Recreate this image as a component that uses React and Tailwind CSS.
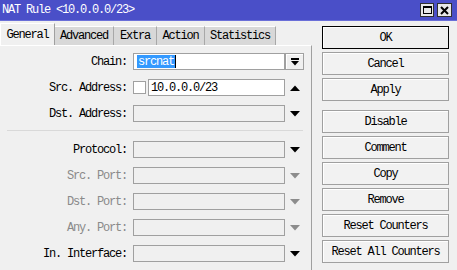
import React from "react";

function Down({ gray }) {
  return (
    <svg width="10" height="6" viewBox="0 0 10 6">
      <polygon points="0,0 10,0 5,5.5" fill={gray ? "#8c8c8c" : "#000"} />
    </svg>
  );
}

function Up() {
  return (
    <svg width="10" height="6" viewBox="0 0 10 6">
      <polygon points="0,6 10,6 5,0.5" fill="#000" />
    </svg>
  );
}

function Row({ label, gray, children, arrow }) {
  return (
    <div className="flex items-center h-[17px]">
      <div className={gray ? "w-[127px] text-right text-[#8a8a8a] whitespace-pre" : "w-[127px] text-right text-black whitespace-pre"}>
        {label}
      </div>
      <div className="ml-[6px] w-[152px] h-[17px] flex">{children}</div>
      <div className="w-[19px] h-[17px] flex items-center justify-center">{arrow}</div>
    </div>
  );
}

function EmptyBox() {
  return <div className="w-full h-full border border-[#a0a0a0] bg-[#f0f0f0]" />;
}

function Btn({ children, def }) {
  return (
    <div
      className={
        def
          ? "h-[23px] w-[127px] flex items-center justify-center border border-black bg-[#f0f0f0] shadow-[inset_1px_1px_0_#ffffff]"
          : "h-[23px] w-[127px] flex items-center justify-center border border-[#a0a0a0] bg-[#f2f2f2] shadow-[inset_1px_1px_0_#ffffff]"
      }
    >
      {children}
    </div>
  );
}

export default function App() {
  return (
    <div className="w-[457px] h-[270px] overflow-hidden bg-[#f0f0f0] font-[family-name:'Liberation_Mono',monospace] text-[12px] tracking-[-1.2px] text-black leading-none">
      {/* title bar */}
      <div className="h-[21px] bg-[#4a4fc8] flex items-center justify-between pl-[2px] pr-[5px] border-b border-[#6a6fd8]">
        <span className="text-white whitespace-pre">NAT Rule &lt;10.0.0.0/23&gt;</span>
        <div className="flex gap-[3px]">
          <div className="w-[14px] h-[14px] bg-[#e8e8e8] border border-[#303030] flex items-center justify-center">
            <div className="w-[9px] h-[8px] border border-black border-t-2" />
          </div>
          <div className="w-[15px] h-[14px] bg-[#e8e8e8] border border-[#303030] flex items-center justify-center">
            <svg width="9" height="9" viewBox="0 0 9 9">
              <path d="M1 1 L8 8 M8 1 L1 8" stroke="#000" strokeWidth="2" />
            </svg>
          </div>
        </div>
      </div>

      <div className="flex">
        {/* left side */}
        <div className="w-[312px] flex flex-col">
          {/* tabs */}
          <div className="flex items-end h-[24px] pt-[2px]">
            <div className="h-[22px] w-[55px] bg-[#f0f0f0] border-t border-l border-white border-r border-r-[#a0a0a0] flex items-center justify-center relative z-10">
              General
            </div>
            <div className="h-[19px] w-[59px] bg-[#d8d8d8] border-t border-white border-r border-r-[#a8a8a8] flex items-center justify-center">
              Advanced
            </div>
            <div className="h-[19px] w-[43px] bg-[#d8d8d8] border-t border-white border-r border-r-[#a8a8a8] flex items-center justify-center">
              Extra
            </div>
            <div className="h-[19px] w-[48px] bg-[#d8d8d8] border-t border-white border-r border-r-[#a8a8a8] flex items-center justify-center">
              Action
            </div>
            <div className="h-[19px] w-[71px] bg-[#d8d8d8] border-t border-white border-r border-r-[#a8a8a8] flex items-center justify-center">
              Statistics
            </div>
          </div>
          {/* panel */}
          <div className="h-[225px] border-t border-white border-r border-r-[#a0a0a0] pt-[7px] flex flex-col">
            <div className="flex flex-col gap-[9px]">
              <Row
                label="Chain:"
                arrow={
                  <div className="w-[19px] h-[17px] border border-[#a0a0a0] bg-[#f0f0f0] shadow-[inset_1px_1px_0_#ffffff] flex flex-col items-center justify-center gap-[1px]">
                    <div className="w-[8px] h-[2px] bg-black" />
                    <svg width="8" height="5" viewBox="0 0 8 5">
                      <polygon points="0,0 8,0 4,4.5" fill="#000" />
                    </svg>
                  </div>
                }
              >
                <div className="w-full h-full border border-[#a0a0a0] bg-white flex items-center pl-[3px]">
                  <span className="bg-[#3399ff] text-white h-[13px] flex items-center px-[1px]">srcnat</span>
                  <span className="w-[1px] h-[13px] bg-black" />
                </div>
              </Row>
              <Row label="Src. Address:" arrow={<Up />}>
                <div className="flex items-center w-full h-full">
                  <div className="w-[13px] h-[13px] border border-[#a0a0a0] bg-white" />
                  <div className="ml-[2px] flex-1 h-[17px] border border-[#a0a0a0] bg-white flex items-center pl-[2px]">
                    10.0.0.0/23
                  </div>
                </div>
              </Row>
              <Row label="Dst. Address:" arrow={<Down />}>
                <EmptyBox />
              </Row>
            </div>
            <div className="ml-[7px] mr-[8px] mt-[8px] mb-[10px] h-[1px] bg-[#d9d9d9]" />
            <div className="flex flex-col gap-[9px]">
              <Row label="Protocol:" arrow={<Down />}>
                <EmptyBox />
              </Row>
              <Row label="Src. Port:" gray arrow={<Down gray />}>
                <EmptyBox />
              </Row>
              <Row label="Dst. Port:" gray arrow={<Down gray />}>
                <EmptyBox />
              </Row>
              <Row label="Any. Port:" gray arrow={<Down gray />}>
                <EmptyBox />
              </Row>
              <Row label="In. Interface:" arrow={<Down />}>
                <EmptyBox />
              </Row>
            </div>
          </div>
        </div>

        {/* right buttons */}
        <div className="ml-[10px] pt-[5px] flex flex-col">
          <div className="flex flex-col gap-[3px]">
            <Btn def>OK</Btn>
            <Btn>Cancel</Btn>
            <Btn>Apply</Btn>
          </div>
          <div className="mt-[9px] flex flex-col gap-[3px]">
            <Btn>Disable</Btn>
            <Btn>Comment</Btn>
            <Btn>Copy</Btn>
            <Btn>Remove</Btn>
            <Btn>Reset Counters</Btn>
            <Btn>Reset All Counters</Btn>
          </div>
        </div>
      </div>
    </div>
  );
}
